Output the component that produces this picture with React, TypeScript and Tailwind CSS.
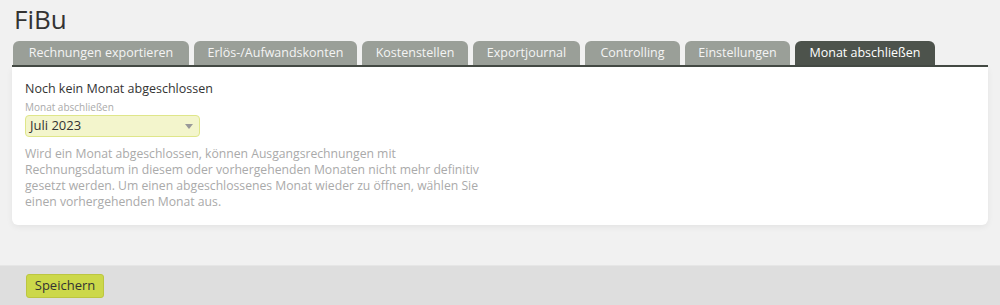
const tabs = [
  { label: "Rechnungen exportieren", w: "w-[176px]" },
  { label: "Erlös-/Aufwandskonten", w: "w-[163px]" },
  { label: "Kostenstellen", w: "w-[106px]" },
  { label: "Exportjournal", w: "w-[107px]" },
  { label: "Controlling", w: "w-[95px]" },
  { label: "Einstellungen", w: "w-[105px]" },
];

const App = () => {
  return (
    <div className="w-[1000px] h-[305px] bg-[#f1f1f1] flex flex-col font-['Open_Sans',sans-serif] overflow-hidden">
      <div className="flex-1 px-[12px]">
        <h1 className="text-[26px] leading-[30px] text-[#333] pl-[2px] pt-[4px] h-[41px]">FiBu</h1>

        <div className="flex items-end gap-[5px] pl-[1px] border-b-2 border-[#444a44]">
          {tabs.map((t) => (
            <div
              key={t.label}
              className={`${t.w} h-[24px] rounded-t-[6px] bg-[#9a9f98] text-[#f4f4f4] text-[12.5px] flex items-center justify-center whitespace-nowrap`}
            >
              {t.label}
            </div>
          ))}
          <div className="w-[140px] h-[24px] rounded-t-[6px] bg-[#4d534c] text-white text-[12.5px] flex items-center justify-center whitespace-nowrap">
            Monat abschließen
          </div>
        </div>

        <div className="bg-white rounded-b-[6px] shadow-[0_2px_6px_rgba(0,0,0,0.06)] px-[13px] pt-[13px] pb-[12px] h-[158px]">
          <p className="text-[12.5px] leading-[18px] text-[#333]">Noch kein Monat abgeschlossen</p>
          <p className="text-[10px] leading-[14px] text-[#aaa] mt-[2px]">Monat abschließen</p>
          <div className="mt-[1px] w-[175px] h-[22px] rounded-[4px] bg-[#f3f5cc] border border-[#dfe68a] flex items-center justify-between pl-[4px] pr-[6px]">
            <span className="text-[13px] text-[#333]">Juli 2023</span>
            <svg width="8" height="5" viewBox="0 0 8 5">
              <path d="M0 0h8L4 5z" fill="#999" />
            </svg>
          </div>
          <p className="mt-[9px] text-[12.2px] leading-[16px] text-[#aaa]">
            Wird ein Monat abgeschlossen, können Ausgangsrechnungen mit
            <br />
            Rechnungsdatum in diesem oder vorhergehenden Monaten nicht mehr definitiv
            <br />
            gesetzt werden. Um einen abgeschlossenes Monat wieder zu öffnen, wählen Sie
            <br />
            einen vorhergehenden Monat aus.
          </p>
        </div>
      </div>

      <div className="h-[40px] bg-[#dedede] border-t border-[#e6e6e6] flex items-center px-[26px]">
        <button className="h-[24px] w-[78px] rounded-[3px] bg-[#ccd84a] border border-[#bcc640] text-[13px] text-[#333]">
          Speichern
        </button>
      </div>
    </div>
  );
};

export default App;
